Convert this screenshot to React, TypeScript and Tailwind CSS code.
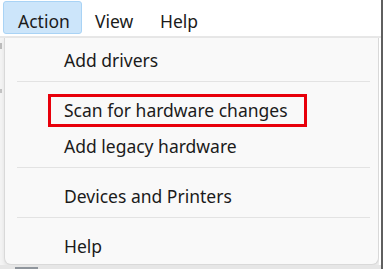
import React from 'react';

const items: Array<string | null> = [
  'Add drivers',
  null,
  'Scan for hardware changes',
  'Add legacy hardware',
  null,
  'Devices and Printers',
  null,
  'Help',
];

function MenuRow({ label, marked }: { label: string; marked?: boolean }) {
  return (
    <div className="relative flex h-[36px] items-center pl-[59px] pt-[3px] text-[17.5px] leading-none text-[#1b1b1b]">
      {label}
      {marked && (
        <div className="pointer-events-none absolute left-[43px] top-[3px] h-[33px] w-[259px] border-[3px] border-[#e8000b]" />
      )}
    </div>
  );
}

function Separator() {
  return (
    <div className="h-[14px] pl-[12px] pr-[8px] pt-[4px]">
      <div className="h-px bg-[#e3e3e3]" />
    </div>
  );
}

export default function App() {
  return (
    <div className="flex h-[269px] w-[383px] overflow-hidden bg-white font-['Noto_Sans',sans-serif]">
      <div className="flex w-[381px] flex-col">
        {/* menu bar */}
        <div className="flex h-[38px] shrink-0 items-start border-b-2 border-[#e8e8e8] bg-white text-[17.5px] text-[#1b1b1b]">
          <div className="ml-[3px] mt-[1px] flex h-[33px] w-[79px] items-center rounded-[3px] border border-[#a9d3f5] bg-[#cce5fa] pl-[14px] pt-[8px] leading-none">
            Action
          </div>
          <div className="flex h-[35px] w-[65px] items-center pl-[13px] pt-[8px] leading-none">View</div>
          <div className="flex h-[35px] items-center pl-[13px] pt-[8px] leading-none">Help</div>
        </div>

        {/* dropdown + background window */}
        <div className="flex min-h-0 flex-1 flex-col bg-[#f3f3f3]">
          <div className="flex">
            <div className="flex w-[4px] flex-col bg-[#f4f4f4]">
              <div className="mt-[5px] h-[6px] w-[2px] bg-[#bdbdbd]" />
              <div className="mt-[40px] h-[4px] w-[2px] bg-[#c4c4c4]" />
            </div>
            <div className="w-[375px] rounded-b-[7px] border border-t-0 border-[#d9d9d9] bg-[#f9f9f9] pb-[1px] pt-[3px] shadow-[0_2px_4px_rgba(0,0,0,0.08)]">
              {items.map((it, i) =>
                it === null ? (
                  <Separator key={i} />
                ) : (
                  <MenuRow key={i} label={it} marked={it === 'Scan for hardware changes'} />
                ),
              )}
            </div>
            <div className="w-[2px] bg-white" />
          </div>
          <div className="flex flex-1 bg-[#e6e6e6]">
            <div className="ml-[15px] mt-[2px] h-[4px] w-[23px] bg-[#8f959c]" />
          </div>
        </div>
      </div>
      <div className="w-[2px] bg-[#5f5f5f]" />
    </div>
  );
}
